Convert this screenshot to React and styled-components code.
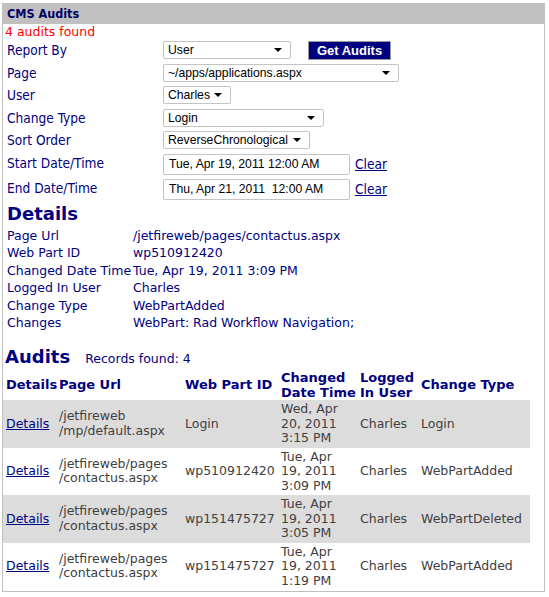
import { Fragment } from "react";
import styled, { createGlobalStyle } from "styled-components";

const GlobalStyle = createGlobalStyle`
  body {
    margin: 0;
    background: #fff;
    font-family: "DejaVu Sans", Verdana, sans-serif;
  }
`;

const Panel = styled.div`
  margin: 3px 0 0 2px;
  width: 543px;
  box-sizing: border-box;
  border: 1px solid #c0c0c0;
  padding-bottom: 1px;
`;

const Header = styled.div`
  height: 20px;
  line-height: 20px;
  background: #c0c0c0;
  padding-left: 4px;
  font-family: "DejaVu Sans Condensed", "DejaVu Sans", sans-serif;
  font-weight: bold;
  font-size: 12.5px;
  color: #000066;
`;

const Found = styled.div`
  height: 16px;
  line-height: 16px;
  padding-left: 2px;
  color: #ff0000;
  font-size: 12.5px;
`;

const Form = styled.div`
  padding-left: 4px;
`;

const FormRow = styled.div`
  display: grid;
  grid-template-columns: 156px auto;
  height: ${(p) => p.$h || 22.5}px;
`;

const Label = styled.div`
  font-family: "DejaVu Sans Condensed", "DejaVu Sans", sans-serif;
  font-size: 13.6px;
  line-height: 20px;
  color: #000080;
`;

const Controls = styled.div`
  display: flex;
  align-items: flex-start;
  padding-top: 1px;
`;

const SelectBox = styled.div`
  position: relative;
  box-sizing: border-box;
  width: ${(p) => p.$w}px;
  height: 18px;
  border: 1px solid #c4c4c4;
  border-radius: 2px;
  padding-left: 4px;
  font-family: "Liberation Sans", Arial, sans-serif;
  font-size: 12.2px;
  line-height: 16px;
  color: #000;
  white-space: nowrap;
  &::after {
    content: "";
    position: absolute;
    right: 8px;
    top: 6px;
    border-left: 4px solid transparent;
    border-right: 4px solid transparent;
    border-top: 4px solid #000;
  }
`;

const Button = styled.button`
  margin-left: 17px;
  box-sizing: border-box;
  width: 83px;
  height: 19px;
  padding: 0;
  background: #000080;
  border: 1px solid #9a9a9a;
  color: #fff;
  font-family: "Liberation Sans", Arial, sans-serif;
  font-weight: bold;
  font-size: 13px;
  line-height: 17px;
`;

const DateInput = styled.div`
  box-sizing: border-box;
  width: 187px;
  height: 21px;
  border: 1px solid #c4c4c4;
  border-radius: 2px;
  padding-left: 5px;
  font-family: "Liberation Sans", Arial, sans-serif;
  font-size: 12.2px;
  line-height: 19px;
  color: #000;
  white-space: pre;
`;

const ClearLink = styled.a`
  margin-left: 5px;
  font-family: "DejaVu Sans Condensed", "DejaVu Sans", sans-serif;
  font-size: 13.6px;
  line-height: 21px;
  color: #000080;
  text-decoration: underline;
`;

const Heading = styled.div`
  height: ${(p) => p.$h}px;
  line-height: 22px;
  padding-left: ${(p) => p.$pl}px;
  font-size: 18px;
  font-weight: bold;
  color: #000080;
`;

const DetailGrid = styled.div`
  display: grid;
  grid-template-columns: 126px auto;
  padding-left: 4px;
  font-size: 12.5px;
  line-height: 17.6px;
  color: #000080;
  white-space: nowrap;
`;

const AuditsBar = styled.div`
  display: flex;
  align-items: baseline;
  margin-top: 14px;
  height: 25px;
  padding-left: 2px;
`;

const Records = styled.span`
  margin-left: 15px;
  font-size: 12.5px;
  color: #000080;
`;

const Table = styled.table`
  width: 527px;
  table-layout: fixed;
  border-collapse: collapse;
  font-size: 12.5px;
  line-height: 14.5px;
`;

const Th = styled.th`
  padding: 0 0 0 3px;
  height: 29px;
  text-align: left;
  vertical-align: middle;
  font-size: 13px;
  font-weight: bold;
  color: #000080;
  white-space: nowrap;
`;

const Tr = styled.tr`
  background: ${(p) => (p.$alt ? "#dcdcdc" : "#fff")};
`;

const Td = styled.td`
  padding: 2px 0 2px 3px;
  vertical-align: middle;
  color: #404040;
  white-space: nowrap;
`;

const RowLink = styled.a`
  color: #000080;
  text-decoration: underline;
`;

const Lines = ({ items }) =>
  items.map((t, i) => (
    <div key={i}>{t}</div>
  ));

const details = [
  ["Page Url", "/jetfireweb/pages/contactus.aspx"],
  ["Web Part ID", "wp510912420"],
  ["Changed Date Time", "Tue, Apr 19, 2011 3:09 PM"],
  ["Logged In User", "Charles"],
  ["Change Type", "WebPartAdded"],
  ["Changes", "WebPart: Rad Workflow Navigation;"],
];

const audits = [
  {
    url: ["/jetfireweb", "/mp/default.aspx"],
    id: "Login",
    date: ["Wed, Apr", "20, 2011", "3:15 PM"],
    type: "Login",
  },
  {
    url: ["/jetfireweb/pages", "/contactus.aspx"],
    id: "wp510912420",
    date: ["Tue, Apr", "19, 2011", "3:09 PM"],
    type: "WebPartAdded",
  },
  {
    url: ["/jetfireweb/pages", "/contactus.aspx"],
    id: "wp151475727",
    date: ["Tue, Apr", "19, 2011", "3:05 PM"],
    type: "WebPartDeleted",
  },
  {
    url: ["/jetfireweb/pages", "/contactus.aspx"],
    id: "wp151475727",
    date: ["Tue, Apr", "19, 2011", "1:19 PM"],
    type: "WebPartAdded",
  },
];

export default function App() {
  return (
    <>
      <GlobalStyle />
      <Panel>
        <Header>CMS Audits</Header>
        <Found>4 audits found</Found>
        <Form>
          <FormRow>
            <Label>Report By</Label>
            <Controls>
              <SelectBox $w={128}>User</SelectBox>
              <Button>Get Audits</Button>
            </Controls>
          </FormRow>
          <FormRow>
            <Label>Page</Label>
            <Controls>
              <SelectBox $w={236}>~/apps/applications.aspx</SelectBox>
            </Controls>
          </FormRow>
          <FormRow>
            <Label>User</Label>
            <Controls>
              <SelectBox $w={68}>Charles</SelectBox>
            </Controls>
          </FormRow>
          <FormRow>
            <Label>Change Type</Label>
            <Controls>
              <SelectBox $w={161}>Login</SelectBox>
            </Controls>
          </FormRow>
          <FormRow>
            <Label>Sort Order</Label>
            <Controls>
              <SelectBox $w={147}>ReverseChronological</SelectBox>
            </Controls>
          </FormRow>
          <FormRow $h={25}>
            <Label>Start Date/Time</Label>
            <Controls>
              <DateInput>Tue, Apr 19, 2011 12:00 AM</DateInput>
              <ClearLink>Clear</ClearLink>
            </Controls>
          </FormRow>
          <FormRow $h={25}>
            <Label>End Date/Time</Label>
            <Controls>
              <DateInput>Thu, Apr 21, 2011  12:00 AM</DateInput>
              <ClearLink>Clear</ClearLink>
            </Controls>
          </FormRow>
        </Form>

        <Heading $h={24} $pl={4}>Details</Heading>
        <DetailGrid>
          {details.map(([k, v]) => (
            <Fragment key={k}>
              <div>{k}</div>
              <div>{v}</div>
            </Fragment>
          ))}
        </DetailGrid>

        <AuditsBar>
          <Heading $h={22} $pl={0}>Audits</Heading>
          <Records>Records found: 4</Records>
        </AuditsBar>

        <Table>
          <colgroup>
            <col style={{ width: 53 }} />
            <col style={{ width: 126 }} />
            <col style={{ width: 96 }} />
            <col style={{ width: 79 }} />
            <col style={{ width: 61 }} />
            <col style={{ width: 112 }} />
          </colgroup>
          <thead>
            <tr>
              <Th>Details</Th>
              <Th>Page Url</Th>
              <Th>Web Part ID</Th>
              <Th>
                <Lines items={["Changed", "Date Time"]} />
              </Th>
              <Th>
                <Lines items={["Logged", "In User"]} />
              </Th>
              <Th>Change Type</Th>
            </tr>
          </thead>
          <tbody>
            {audits.map((a, i) => (
              <Tr key={i} $alt={i % 2 === 0}>
                <Td>
                  <RowLink>Details</RowLink>
                </Td>
                <Td>
                  <Lines items={a.url} />
                </Td>
                <Td>{a.id}</Td>
                <Td>
                  <Lines items={a.date} />
                </Td>
                <Td>Charles</Td>
                <Td>{a.type}</Td>
              </Tr>
            ))}
          </tbody>
        </Table>
      </Panel>
    </>
  );
}
